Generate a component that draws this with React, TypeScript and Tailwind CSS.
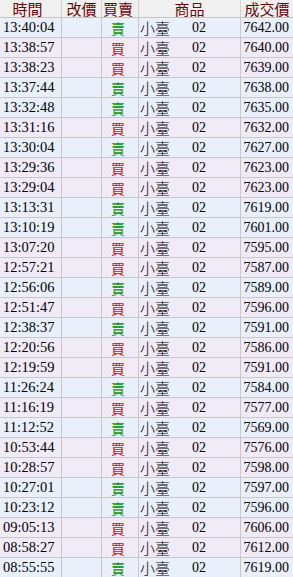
import React from "react";

type Row = { t: string; s: "買" | "賣"; p: string };

const rows: Row[] = [
  { t: "13:40:04", s: "賣", p: "7642.00" },
  { t: "13:38:57", s: "買", p: "7640.00" },
  { t: "13:38:23", s: "買", p: "7639.00" },
  { t: "13:37:44", s: "賣", p: "7638.00" },
  { t: "13:32:48", s: "賣", p: "7635.00" },
  { t: "13:31:16", s: "買", p: "7632.00" },
  { t: "13:30:04", s: "賣", p: "7627.00" },
  { t: "13:29:36", s: "買", p: "7623.00" },
  { t: "13:29:04", s: "買", p: "7623.00" },
  { t: "13:13:31", s: "賣", p: "7619.00" },
  { t: "13:10:19", s: "賣", p: "7601.00" },
  { t: "13:07:20", s: "買", p: "7595.00" },
  { t: "12:57:21", s: "買", p: "7587.00" },
  { t: "12:56:06", s: "賣", p: "7589.00" },
  { t: "12:51:47", s: "買", p: "7596.00" },
  { t: "12:38:37", s: "賣", p: "7591.00" },
  { t: "12:20:56", s: "買", p: "7586.00" },
  { t: "12:19:59", s: "買", p: "7591.00" },
  { t: "11:26:24", s: "賣", p: "7584.00" },
  { t: "11:16:19", s: "買", p: "7577.00" },
  { t: "11:12:52", s: "賣", p: "7569.00" },
  { t: "10:53:44", s: "買", p: "7576.00" },
  { t: "10:28:57", s: "買", p: "7598.00" },
  { t: "10:27:01", s: "賣", p: "7597.00" },
  { t: "10:23:12", s: "賣", p: "7596.00" },
  { t: "09:05:13", s: "買", p: "7606.00" },
  { t: "08:58:27", s: "買", p: "7612.00" },
  { t: "08:55:55", s: "賣", p: "7619.00" },
];

const num = { fontFamily: '"Liberation Serif", serif' };
const cjk = { fontFamily: '"Noto Sans CJK TC", "Noto Sans CJK SC", sans-serif' };

export default function App() {
  return (
    <div className="w-[293px] h-[577px] overflow-hidden bg-white select-none">
      <div className="grid grid-cols-[62px_40px_37px_102px_52px] h-[18px] bg-[#f0f0f0] border-b border-[#c4c4c4] text-[#6a0505] text-[15px] leading-[15px]" style={cjk}>
        <div className="border-r border-[#d4d4d4] flex items-center justify-center pr-[6px]">時間</div>
        <div className="border-r border-[#d4d4d4] flex items-center justify-center">改價</div>
        <div className="border-r border-[#d4d4d4] flex items-center justify-center pr-[4px]">買賣</div>
        <div className="border-r border-[#d4d4d4] flex items-center justify-center">商品</div>
        <div className="flex items-center justify-center">成交價</div>
      </div>
      {rows.map((r, i) => {
        const sell = r.s === "賣";
        return (
          <div
            key={i}
            className={
              "grid grid-cols-[62px_40px_37px_102px_52px] h-[20px] border-b border-[#c8c8c8] text-black " +
              (sell ? "bg-[#e9f0fb]" : "bg-[#f1ebf8]")
            }
          >
            <div className="border-r border-[#c8c8c8] flex items-center pl-[3px] text-[14.5px] leading-none" style={num}>
              {r.t}
            </div>
            <div className="border-r border-[#c8c8c8]" />
            <div
              className={
                "border-r border-[#c8c8c8] flex items-center justify-center pr-[4px] text-[14px] leading-none " +
                (sell ? "text-[#129412]" : "text-[#f00000]")
              }
              style={cjk}
            >
              {r.s}
            </div>
            <div className="border-r border-[#c8c8c8] flex items-center pl-[1px]">
              <span className="w-[52px] text-[15px] leading-none font-light" style={cjk}>小臺</span>
              <span className="text-[14px] leading-none" style={num}>02</span>
            </div>
            <div className="flex items-center justify-end pr-[4px] text-[14px] leading-none" style={num}>
              {r.p}
            </div>
          </div>
        );
      })}
    </div>
  );
}
